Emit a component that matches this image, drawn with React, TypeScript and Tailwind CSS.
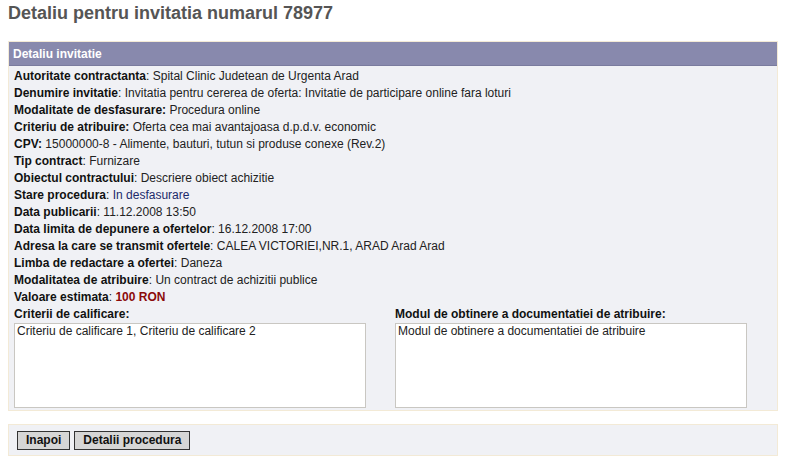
import React from 'react';

type Row = {
  label: string;
  colonBold?: boolean;
  value: string;
  valueClass?: string;
};

const rows: Row[] = [
  { label: 'Autoritate contractanta', value: 'Spital Clinic Judetean de Urgenta Arad' },
  { label: 'Denumire invitatie', value: 'Invitatia pentru cererea de oferta: Invitatie de participare online fara loturi' },
  { label: 'Modalitate de desfasurare', colonBold: true, value: 'Procedura online' },
  { label: 'Criteriu de atribuire', colonBold: true, value: 'Oferta cea mai avantajoasa d.p.d.v. economic' },
  { label: 'CPV', colonBold: true, value: '15000000-8 - Alimente, bauturi, tutun si produse conexe (Rev.2)' },
  { label: 'Tip contract', value: 'Furnizare' },
  { label: 'Obiectul contractului', value: 'Descriere obiect achizitie' },
  { label: 'Stare procedura', value: 'In desfasurare', valueClass: 'text-[#1c2a6b]' },
  { label: 'Data publicarii', value: '11.12.2008 13:50' },
  { label: 'Data limita de depunere a ofertelor', value: '16.12.2008 17:00' },
  { label: 'Adresa la care se transmit ofertele', value: 'CALEA VICTORIEI,NR.1, ARAD Arad Arad' },
  { label: 'Limba de redactare a ofertei', value: 'Daneza' },
  { label: 'Modalitatea de atribuire', value: 'Un contract de achizitii publice' },
  { label: 'Valoare estimata', value: '100 RON', valueClass: 'font-bold text-[#8b0a0a]' },
];

const App = () => {
  return (
    <div className="min-h-screen bg-white px-2 pt-[2px] font-['Liberation_Sans',Arial,sans-serif] text-[12px] text-[#111]">
      {/* Title */}
      <h1 className="text-[18px] leading-[22px] font-bold text-[#555]">Detaliu pentru invitatia numarul 78977</h1>

      {/* Detail panel */}
      <div className="mt-[17px] w-[770px] border border-[#f3ead6] bg-[#f0f1f5]">
        <div className="h-[24px] bg-[#8889ad] px-[4px] leading-[24px] font-bold text-white border-b border-[#7a7b9e]">Detaliu invitatie</div>
        <div className="px-[5px] pt-[2px] pb-[2px]">
          {rows.map((r) => (
            <div key={r.label} className="h-[17px] leading-[17px] whitespace-nowrap">
              <span className="font-bold">{r.label}{r.colonBold ? ':' : ''}</span>
              {r.colonBold ? ' ' : ': '}
              <span className={r.valueClass ?? 'text-[#222]'}>{r.value}</span>
            </div>
          ))}
          <div className="flex gap-[29px]">
            <div className="w-[352px]">
              <div className="h-[17px] leading-[17px] font-bold">Criterii de calificare:</div>
              <div className="h-[85px] border border-[#c9c7c2] bg-white px-[2px] leading-[15px] text-[#222]">Criteriu de calificare 1, Criteriu de calificare 2</div>
            </div>
            <div className="w-[352px]">
              <div className="h-[17px] leading-[17px] font-bold">Modul de obtinere a documentatiei de atribuire:</div>
              <div className="h-[85px] border border-[#c9c7c2] bg-white px-[2px] leading-[15px] text-[#222]">Modul de obtinere a documentatiei de atribuire</div>
            </div>
          </div>
        </div>
      </div>

      {/* Buttons */}
      <div className="mt-[13px] flex h-[32px] w-[770px] items-center gap-[4px] border border-[#f3ead6] bg-[#f0f1f5] px-[8px]">
        <button className="h-[19px] border border-[#333] bg-[#d6d6d6] px-[8px] font-bold leading-[16px] text-[#111]">Inapoi</button>
        <button className="h-[19px] border border-[#333] bg-[#d6d6d6] px-[8px] font-bold leading-[16px] text-[#111]">Detalii procedura</button>
      </div>
    </div>
  );
};

export default App;
